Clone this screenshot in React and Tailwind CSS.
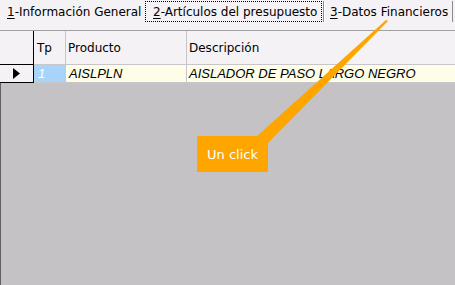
import React from "react";

export default function App() {
  return (
    <div className="relative w-[455px] h-[285px] overflow-hidden bg-[#f5f2f5] flex flex-col text-black font-['DejaVu_Sans',sans-serif] text-[12px] leading-none">
      {/* Tabs */}
      <div className="flex items-center h-[23px] shrink-0">
        <div className="w-[145px] pl-[7px] whitespace-nowrap">
          <span className="underline underline-offset-2">1</span>-Información General
        </div>
        <div className="w-[177px] h-[21px] border border-dotted border-black pl-[7px] flex items-center whitespace-nowrap">
          <span className="underline underline-offset-2">2</span>-Artículos del presupuesto
        </div>
        <div className="w-px h-[21px] bg-[#8c8c8c] ml-px" />
        <div className="w-px h-[21px] bg-white" />
        <div className="w-[127px] pl-[5px] whitespace-nowrap">
          <span className="underline underline-offset-2">3</span>-Datos Financieros
        </div>
        <div className="w-px h-[21px] bg-[#8c8c8c]" />
      </div>
      <div className="h-[7px] shrink-0" />

      {/* Grid */}
      <div className="flex-1 flex flex-col border-t border-[#a0a0a0]">
        {/* Header */}
        <div className="flex h-[34px] shrink-0">
          <div className="w-[34px] border-r border-b border-black" />
          <div className="w-[32px] border-r border-b border-[#c8c6c8] pl-[3px] flex items-center">Tp</div>
          <div className="w-[121px] border-r border-b border-[#c8c6c8] pl-[2px] flex items-center">Producto</div>
          <div className="flex-1 border-b border-[#c8c6c8] pl-[2px] flex items-center">Descripción</div>
        </div>
        {/* Data row */}
        <div className="flex h-[18px] shrink-0 text-[13px] italic font-['Liberation_Sans',sans-serif]">
          <div className="w-[34px] border-r border-b border-black flex items-center justify-center">
            <svg width="7" height="11" viewBox="0 0 7 11">
              <polygon points="0,0 7,5.5 0,11" fill="#000" />
            </svg>
          </div>
          <div className="w-[32px] bg-[#a8d4fc] border-r border-b border-[#c8c6c8] pl-[4px] flex items-center text-white">1</div>
          <div className="w-[121px] bg-[#fdfde8] border-r border-b border-[#c8c6c8] pl-[3px] flex items-center">AISLPLN</div>
          <div className="flex-1 bg-[#fdfde8] border-b border-[#c8c6c8] pl-[2px] flex items-center whitespace-nowrap">
            AISLADOR DE PASO LARGO NEGRO
          </div>
        </div>
        {/* Empty area */}
        <div className="flex-1 bg-[#c4c2c4] border-l border-[#5f6360]" />
      </div>

      {/* Arrow overlay */}
      <svg className="absolute inset-0 pointer-events-none" width="455" height="285" viewBox="0 0 455 285">
        <polygon points="386,20 388,21 268,143 256,137" fill="#ffa500" />
      </svg>
      {/* Callout */}
      <div className="absolute left-[197px] top-[136px] w-[71px] h-[36px] bg-[#ffa500] text-white text-[13px] flex items-center justify-center">
        Un click
      </div>
    </div>
  );
}
